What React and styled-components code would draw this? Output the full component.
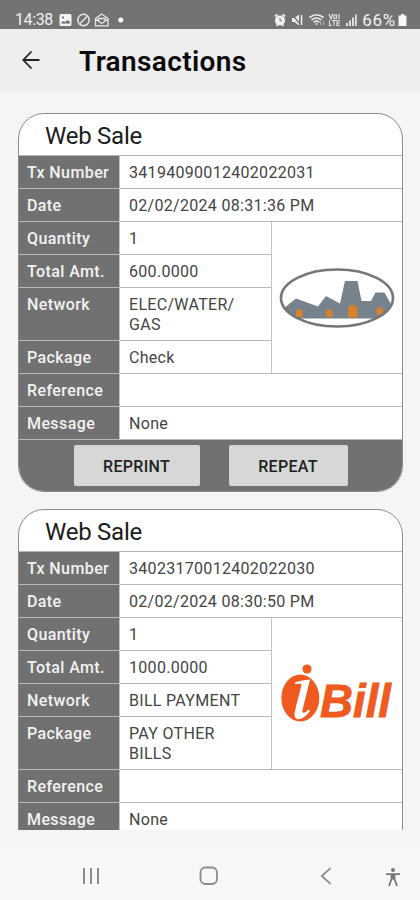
import React from 'react';
import styled, { createGlobalStyle } from 'styled-components';

const transactions = [
	{
		title: 'Web Sale',
		number: '34194090012402022031',
		date: '02/02/2024 08:31:36 PM',
		quantity: '1',
		total: '600.0000',
		network: 'ELEC/WATER/ GAS',
		pack: 'Check',
		reference: '',
		message: 'None',
		logo: 'skyline',
	},
	{
		title: 'Web Sale',
		number: '34023170012402022030',
		date: '02/02/2024 08:30:50 PM',
		quantity: '1',
		total: '1000.0000',
		network: 'BILL PAYMENT',
		pack: 'PAY OTHER BILLS',
		reference: '',
		message: 'None',
		logo: 'ibill',
	},
];

const StatusIcons = () => (
	<svg width='66' height='16' viewBox='0 0 66 16' fill='none'>
		<path
			fill='#f4f4f4'
			fillRule='evenodd'
			d='M2 2h9a1.500 1.500 0 0 1 1.500 1.500v9A1.500 1.500 0 0 1 11 14H2a1.500 1.500 0 0 1-1.500-1.500v-9A1.500 1.500 0 0 1 2 2ZM2 11.500h9V10L8.500 8 6 10 4.500 9 2 10.800ZM3 4.500v2h2v-2Z'
		/>
		<g stroke='#e6e6e6' strokeWidth='1.5'>
			<circle cx='24.500' cy='8' r='5.700' />
			<path d='M20.800 11.700l7.400-7.400' />
			<path d='M36.500 6.500L42.700 2l6.300 4.500v7.300H36.500ZM36.500 7l6.200 4.500L49 7M39.500 9V6.500h6.500V9' strokeWidth='1.3' />
		</g>
		<circle cx='61.800' cy='8' r='2.500' fill='#fff' />
	</svg>
);

const SignalIcons = () => (
	<svg width='86' height='16' viewBox='0 0 86 16' fill='none'>
		<circle cx='6' cy='8.500' r='5' fill='#f2f2f2' />
		<path d='M1 4.500l2.500-2M11 4.500l-2.500-2M2.500 14l1.500-2M9.500 14L8 12' stroke='#f2f2f2' strokeWidth='1.800' />
		<path d='M6 5.800v3h2' stroke='#737373' strokeWidth='1' />
		<path d='M18 6h2.500L25 2.500v11L20.500 10H18Z' fill='#ececec' />
		<path d='M18 2.500l9 10.500' stroke='#737373' strokeWidth='1.200' />
		<path d='M27.500 3v10' stroke='#ececec' strokeWidth='1.600' />
		<g stroke='#ececec' strokeWidth='1.600'>
			<path d='M35.500 5.500Q42.500 0 49.500 5.500M37.500 8Q42.500 4 47.500 8M39.700 10.400Q42.500 8 45.300 10.400' />
			<path d='M46.500 13V9.500M49.500 9v4' strokeWidth='.9' opacity='.6' />
		</g>
		<path d='M41 11.500h3L42.500 13.300Z' fill='#fff' />
		<g stroke='#e4e4e4' strokeWidth='1.200'>
			<path d='M55 2l2 5 1.800-5M60 3h2.500v3.500H60ZM65 2v5M55.500 8.500v5H58M58 8.500h4M60 8.500v5M66 8.700h-3v4.800h3M63 11h3' />
		</g>
		<g fill='#e0e0e0'>
			<path d='M72 11h2v3h-2ZM75 8.500h2V14h-2ZM78 5.500h2V14h-2ZM81 2.500h1.800V14H81Z' />
		</g>
	</svg>
);

const SkylineLogo = () => (
	<svg width='116' height='62' viewBox='0 0 116 62'>
		<clipPath id='oval'>
			<ellipse cx='58' cy='31' rx='56' ry='28.500' />
		</clipPath>
		<g clipPath='url(#oval)'>
			<path
				d='M0 45L17 31.500 39 39.500 47 29 61 36.500 66 14h12.500L82.500 34H92l4.500-8.500h9l7 12.500v13.500H0Z'
				fill='#76828c'
			/>
			<path
				d='M17 50v-5.500l3.300-3 3.200 3V50ZM47 50v-5.500l3.200-3 3.300 3V50ZM69 50.500V40.500l2.500-2.500h4.500l2.500 2.500v10ZM97.500 47v-5l3-2.500 3.500 2.500v4l-3.500 2Z'
				fill='#d9802c'
			/>
		</g>
		<ellipse cx='58' cy='31' rx='56' ry='28.500' fill='none' stroke='#777' strokeWidth='2.700' />
	</svg>
);

const BillLogo = () => (
	<svg width='120' height='60' viewBox='-3 0 120 60' fill='#ee5a20'>
		<ellipse cx='20.300' cy='34' rx='19' ry='23.500' />
		<circle cx='27' cy='5' r='6.300' fill='#fff' />
		<circle cx='27' cy='5' r='4.600' />
		<path
			d='M15 18.500C20 16.500 25 16 30 15.500L22.500 46C21.500 50 25 49.500 28.500 45.500L30 46.500C25.500 55 14.500 59 14.500 50.500C14.500 48 19.500 29 21.500 21C21.800 19.500 18 19.700 15 20Z'
			fill='#fff'
		/>
		<text
			x='40'
			y='52.800'
			fontFamily='Liberation Sans, Arial, sans-serif'
			fontWeight='700'
			fontStyle='italic'
			fontSize='46'
			textLength='71'
			lengthAdjust='spacingAndGlyphs'
			stroke='#ee5a20'
			strokeWidth='.8'
		>
			Bill
		</text>
	</svg>
);

const Field = ({ label, children }) => (
	<Row>
		<Label>{label}</Label>
		<Value>{children}</Value>
	</Row>
);

const Transaction = ({ data }) => (
	<Card>
		<CardTitle>{data.title}</CardTitle>
		<Field label='Tx Number'>{data.number}</Field>
		<Field label='Date'>{data.date}</Field>
		<Details>
			<Fields>
				<Field label='Quantity'>{data.quantity}</Field>
				<Field label='Total Amt.'>{data.total}</Field>
				<Field label='Network'>{data.network}</Field>
				<Field label='Package'>{data.pack}</Field>
			</Fields>
			<Logo>{data.logo === 'ibill' ? <BillLogo /> : <SkylineLogo />}</Logo>
		</Details>
		<Field label='Reference'>{data.reference}</Field>
		<Field label='Message'>{data.message}</Field>
		<Actions>
			<Button $width='126px'>REPRINT</Button>
			<Button $width='119px'>REPEAT</Button>
		</Actions>
	</Card>
);

const App = () => {
	return (
		<>
			<GlobalStyle />
			<Screen>
				<StatusBar>
					<Clock>14:38</Clock>
					<StatusIcons />
					<Spacer />
					<SignalIcons />
					<Battery>66%</Battery>
					<svg width='9' height='12' viewBox='0 0 9 12' fill='#f6f6f6'>
						<path d='M3 0h3v1.500h2.500V12h-8V1.500H3Z' />
					</svg>
				</StatusBar>
				<Header>
					<svg width='18' height='20' viewBox='0 0 18 20' fill='none' stroke='#222' strokeWidth='1.8'>
						<path d='M17.500 10H1.500M9.500 1.500L1.300 10l8.200 8.500' />
					</svg>
					<h1>Transactions</h1>
				</Header>
				<List>
					{transactions.map((item) => (
						<Transaction key={item.number} data={item} />
					))}
				</List>
				<NavBar>
					<svg width='18' height='18' viewBox='0 0 18 18' stroke='#8b8b8d' strokeWidth='2'>
						<path d='M2 1v16M9 1v16M16 1v16' />
					</svg>
					<svg width='20' height='20' viewBox='0 0 20 20' fill='none' stroke='#8b8b8d' strokeWidth='1.8'>
						<rect x='1.500' y='1.500' width='16.500' height='16.500' rx='5' />
					</svg>
					<svg width='12' height='18' viewBox='0 0 12 18' fill='none' stroke='#8b8b8d' strokeWidth='1.8'>
						<path d='M10.500 1.200L1.800 9l8.700 7.800' />
					</svg>
					<svg width='16' height='22' viewBox='0 -2 16 22' fill='none' stroke='#777' strokeWidth='1.8'>
						<circle cx='8' cy='3' r='2' fill='#777' stroke='none' />
						<path d='M1 7.200h14M6.500 7v5L4 19M9.500 7v5l2.500 7' />
						<path d='M6 7h4v5.500H6Z' fill='#777' stroke='none' />
					</svg>
				</NavBar>
			</Screen>
		</>
	);
};

export default App;

const GlobalStyle = createGlobalStyle`
	* {
		box-sizing: border-box;
		margin: 0;
		padding: 0;
	}
	body {
		font-family: Roboto, sans-serif;
		background: #f5f5f5;
	}
	svg {
		display: block;
		flex-shrink: 0;
	}
`;
const Screen = styled.div`
	display: flex;
	flex-direction: column;
	width: 420px;
	height: 900px;
	overflow: hidden;
	background: #f5f5f5;
`;
const StatusBar = styled.div`
	display: flex;
	align-items: center;
	height: 29px;
	padding: 10px 13px 0 15px;
	background: #737373;
	color: #f2f2f2;
`;
const Clock = styled.span`
	width: 44px;
	font-size: 16px;
	letter-spacing: -0.4px;
`;
const Spacer = styled.div`
	flex: 1;
`;
const Battery = styled.span`
	width: 38px;
	font-size: 17px;
	letter-spacing: 0.7px;
	text-align: center;
`;
const Header = styled.header`
	display: flex;
	align-items: center;
	gap: 39px;
	height: 62px;
	padding: 0 22px 1px;
	background: #eeeeee;
	h1 {
		font-size: 28px;
		font-weight: 600;
		line-height: 34px;
		letter-spacing: 0.37px;
		padding-top: 4px;
		color: #0a0a0a;
	}
`;
const List = styled.main`
	display: flex;
	flex-direction: column;
	gap: 17px;
	height: 739px;
	padding: 22px 17px 0 18px;
	overflow: hidden;
`;
const Card = styled.section`
	flex-shrink: 0;
	border: 1px solid #8c8c8c;
	border-radius: 26px;
	background: #fff;
	overflow: hidden;
`;
const CardTitle = styled.h2`
	height: 42px;
	padding-left: 26px;
	border-bottom: 1px solid #b4b4b4;
	font-size: 24px;
	font-weight: 400;
	line-height: 44px;
	letter-spacing: -0.25px;
	color: #1c1c1c;
`;
const Row = styled.div`
	display: grid;
	grid-template-columns: 100px 1fr;
	min-height: 33px;
	border-bottom: 1px solid #b9b9b9;
	line-height: 20px;
	font-size: 16px;
`;
const Label = styled.div`
	padding: 7px 0 5px 8px;
	background: #717171;
	color: #f2f2f2;
	font-weight: 500;
	letter-spacing: 0.4px;
	white-space: nowrap;
`;
const Value = styled.div`
	padding: 7px 20px 5px 9px;
	border-left: 1px solid #c4c4c4;
	color: #444;
	letter-spacing: 0.3px;
`;
const Details = styled.div`
	display: flex;
`;
const Fields = styled.div`
	width: 252px;
`;
const Logo = styled.div`
	flex: 1;
	display: flex;
	align-items: center;
	justify-content: center;
	border-left: 1px solid #c4c4c4;
	border-bottom: 1px solid #b9b9b9;
`;
const Actions = styled.div`
	display: flex;
	justify-content: center;
	gap: 29px;
	height: 51px;
	padding-top: 5px;
	background: #717171;
`;
const Button = styled.button`
	width: ${({ $width }) => $width};
	height: 41px;
	padding-top: 2px;
	border: none;
	border-radius: 2px;
	background: #d6d8d7;
	font-family: Roboto, sans-serif;
	font-size: 16px;
	font-weight: 500;
	letter-spacing: 0.3px;
	color: #222;
`;
const NavBar = styled.nav`
	display: grid;
	grid-template-columns: 117px 121px 65px 1fr;
	align-items: center;
	align-content: start;
	height: 70px;
	padding: 35px 0 0 82px;
	background: linear-gradient(#f5f5f5, #f7f7f9 40%);
`;
